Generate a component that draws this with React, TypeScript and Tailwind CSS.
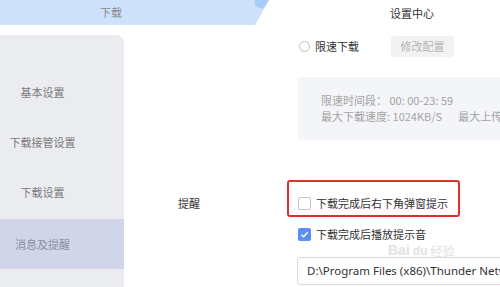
import React from "react";

const menu = ["基本设置", "下载接管设置", "下载设置", "消息及提醒"];

const App = () => {
  return (
    <div
      className="relative w-[500px] h-[287px] overflow-hidden bg-white text-[11px]"
      style={{ fontFamily: '"Noto Sans CJK SC", "Noto Sans", sans-serif' }}
    >
      {/* Tabs */}
      <div className="flex h-[25px]">
        <div className="w-[255px] bg-[#cde1fb] pl-[100px] leading-[25px] text-[#8a8a8a]">
          下载
        </div>
        <svg width="16" height="25" viewBox="0 0 16 25">
          <polygon points="0,0 14,0 0,25" fill="#cde1fb" />
          <polygon points="0,0 14,0 8,9 0,6" fill="#a9cbf7" />
        </svg>
        <div className="flex-1 pl-[119px] leading-[27px] text-[#333]">
          设置中心
        </div>
      </div>

      <div className="flex mt-[10px]">
        {/* Sidebar */}
        <div className="w-[124px] h-[260px] shrink-0 rounded-tr-[8px] bg-[#ebecf0] pt-[32px]">
          {menu.map((item, i) => (
            <div
              key={item}
              className={`h-[50px] w-[124px] flex items-center ${
                i === 3 ? "bg-[#d0d6e7] text-[#8a8fa3] mt-[2px]" : "text-[#7a7a7a]"
              }`}
            >
              <span className="w-[85px] text-center">{item}</span>
            </div>
          ))}
        </div>

        {/* Content */}
        <div className="flex-1 flex flex-col">
          <div className="flex items-center h-[21px] mt-[1px] pl-[175px]">
            <span className="w-[11px] h-[11px] rounded-full border border-[#bdbdbd]" />
            <span className="ml-[5px] text-[#333]">限速下载</span>
            <span className="ml-[32px] h-[21px] w-[63px] bg-[#f2f2f3] rounded-[2px] flex items-center justify-center text-[#b3b3b3]">
              修改配置
            </span>
          </div>

          <div className="mt-[20px] ml-[174px] h-[63px] w-[220px] rounded-[4px] bg-[#f4f5f8] pl-[23px] pt-[15px] text-[#a3a3a3] leading-[16px] whitespace-nowrap">
            <div>限速时间段： 00: 00-23: 59</div>
            <div>
              最大下载速度: 1024KB/S<span className="ml-[16px]">最大上传速度</span>
            </div>
          </div>

          <div className="flex mt-[40px]">
            <div className="w-[163px] shrink-0 pl-[54px] pt-[15px] leading-[16px] text-[#333]">
              提醒
            </div>
            <div className="flex-1 flex flex-col">
              <div className="w-[173px] h-[37px] border-2 border-[#e0302a] rounded-[3px] flex items-center pt-[9px] pl-[9px]">
                <span className="w-[13px] h-[13px] rounded-[2px] border border-[#c4c4c4] bg-white" />
                <span className="ml-[5px] text-[#333]">下载完成后右下角弹窗提示</span>
              </div>
              <div className="flex items-center h-[28px] mt-[3px] pl-[11px]">
                <span className="w-[13px] h-[13px] rounded-[2px] bg-[#5c8ff0] flex items-center justify-center">
                  <svg width="9" height="9" viewBox="0 0 10 10">
                    <path d="M1.5 5.2 L4 7.5 L8.5 2.5" fill="none" stroke="white" strokeWidth="1.6" />
                  </svg>
                </span>
                <span className="ml-[5px] text-[#333]">下载完成后播放提示音</span>
              </div>
              <div className="mt-[9px] ml-[10px] h-[28px] w-[240px] border border-[#d9d9d9] rounded-[3px] flex items-center pl-[9px] whitespace-nowrap text-[11.5px] text-[#333]">
                <span style={{ fontFamily: '"Noto Sans", sans-serif' }}>
                  D:\Program Files (x86)\Thunder Network\Thunder
                </span>
              </div>
            </div>
          </div>
        </div>
      </div>

      {/* Watermark */}
      <div className="absolute left-[388px] top-[243px] flex items-end gap-[3px] text-[#e2e2e2] pointer-events-none">
        <span className="text-[14px] font-bold leading-none" style={{ fontFamily: '"Liberation Sans", sans-serif' }}>
          Bai
        </span>
        <span className="text-[12px] font-bold leading-none" style={{ fontFamily: '"Liberation Sans", sans-serif' }}>
          du
        </span>
        <span className="text-[12px] leading-none">经验</span>
      </div>
    </div>
  );
};

export default App;
